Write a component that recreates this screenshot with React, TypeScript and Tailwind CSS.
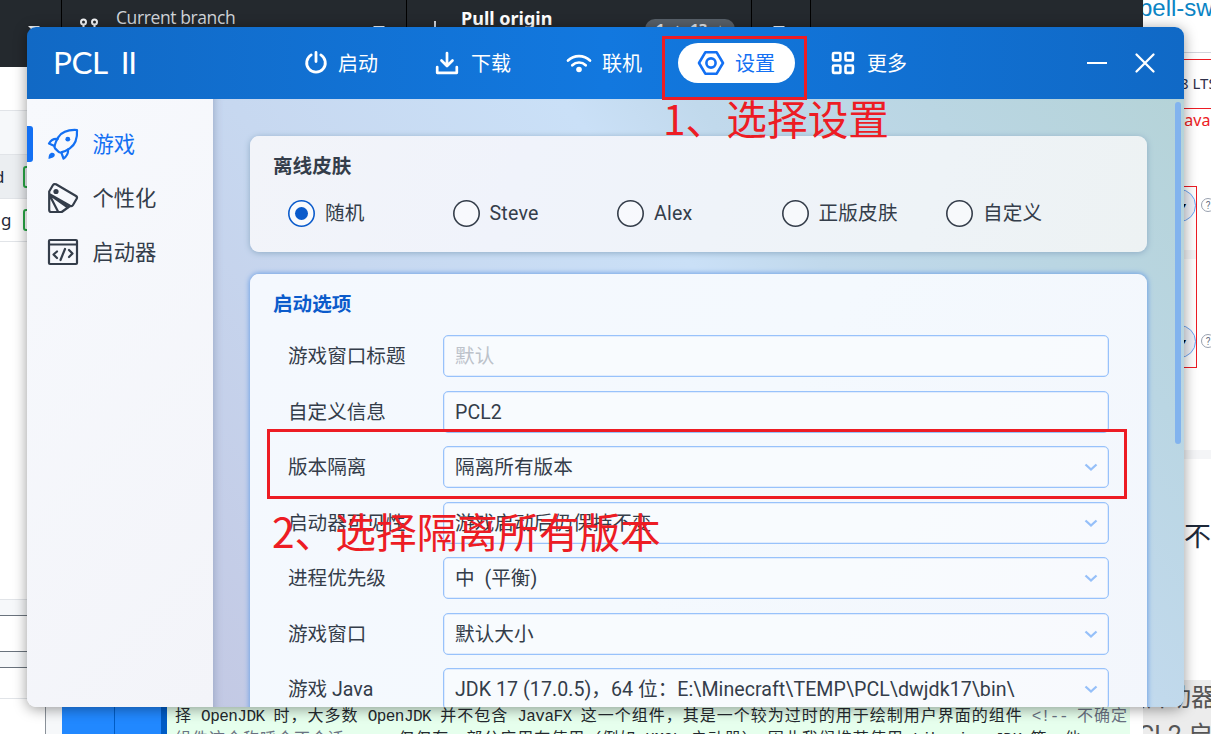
import React from "react";

const cjk = "font-['Roboto','Noto_Sans_CJK_SC',sans-serif]";

function Caret({ className = "" }: { className?: string }) {
  return <span className={"block h-0 w-0 border-x-[6px] border-t-[6px] border-x-transparent border-t-gray-100 " + className} />;
}

function BranchBar() {
  return (
    <div className="absolute left-0 top-0 flex h-[67px] w-[1143px] bg-[#24292e] text-[#d1d5da]">
      <div className="w-[62px] shrink-0 border-r border-black pl-[28px] pt-[26px]"><Caret /></div>
      <div className="flex w-[345px] shrink-0 border-r border-black pl-[17px]">
        <svg className="mt-[17px] h-[20px] w-[20px]" viewBox="0 0 20 20" fill="none" stroke="#f3f4f6" strokeWidth="2">
          <circle cx="4.500" cy="5" r="2.500" /><circle cx="15.500" cy="5" r="2.500" /><path d="M4.500 7.500v8M15.500 7.500v6" />
        </svg>
        <div className="ml-[17px] mt-[5px] w-[257px] whitespace-nowrap font-['Open_Sans',sans-serif] text-[17.500px] leading-[24px] tracking-[-0.400px]">Current branch</div>
        <Caret className="mt-[26px]" />
      </div>
      <div className="flex w-[345px] shrink-0 border-r border-black pl-[27px]">
        <div className="mt-[21px] h-[10px] w-[2px] bg-gray-300" />
        <div className="ml-[25px] mt-[6px] w-[184px] whitespace-nowrap font-['Noto_Sans',sans-serif] text-[18px] font-bold leading-[24px] text-white">Pull origin</div>
        <div className="mt-[19px] flex h-[20px] w-[90px] justify-center gap-[9px] rounded-full bg-[#586069] font-['Noto_Sans',sans-serif] text-[15px] font-bold leading-[18px] text-gray-200">
          <span>1</span><span>↑</span><span>13</span><span>↓</span>
        </div>
      </div>
      <div className="w-[59px] shrink-0 border-r border-black pl-[21px] pt-[26px]"><Caret /></div>
    </div>
  );
}

function FileList() {
  return (
    <div className="absolute left-0 top-[67px] flex h-[667px] w-[62px] flex-col bg-white font-['Noto_Sans',sans-serif] text-[17px] text-gray-800">
      <div className="h-[44px] border-b border-[#e1e4e8]" />
      <div className="h-[44px] border-b border-[#e1e4e8] bg-[#f6f8fa]" />
      <div className="flex h-[44px] items-center justify-between border-b border-[#e1e4e8] bg-[#ebeef1] pr-[17px]">
        <span className="-ml-[6px]">d</span><span className="h-[22px] w-[22px] rounded-[3px] border-2 border-[#28a745]" />
      </div>
      <div className="flex h-[43px] items-center justify-between border-b border-[#e1e4e8] pr-[17px]">
        <span className="ml-px">g</span><span className="h-[22px] w-[22px] rounded-[3px] border-2 border-[#28a745]" />
      </div>
      <div className="h-[357px]" />
      <div className="h-[17px] border-b border-t border-b-[#6a737d] border-t-[#e1e4e8] bg-[#f6f8fa]" />
      <div className="h-[35px]" />
      <div className="h-[17px] border-y border-[#6a737d] bg-[#f6f8fa]" />
      <div className="h-[31px] border-b border-[#e1e4e8]" />
      <div className="ml-[45px] flex-1 border-l border-[#8a9199] bg-[#f6f8fa]" />
    </div>
  );
}

/* Keeps the half-width and full-width runs on the editor's character grid. */
function Mono({ text }: { text: string }) {
  return (
    <>
      {text.split(/([\x20-\x7e]+)/).map((part, i) => (
        <span key={i} className={i % 2 ? "tracking-[-0.540px]" : "tracking-[1px]"}>{part}</span>
      ))}
    </>
  );
}

function DiffView() {
  return (
    <div className="absolute left-[62px] top-[680px] flex h-[54px] w-[1068px]">
      <div className="w-[53px] shrink-0 border-r border-[#005cc5] bg-[#2188ff]" />
      <div className="w-[46px] shrink-0 bg-[#2188ff]" />
      <div className="w-[6px] shrink-0 bg-[#005cc5]" />
      <div className="flex-1 overflow-hidden whitespace-pre bg-[#e6ffed] pl-[8px] pt-[27px] font-['Liberation_Mono','Noto_Sans_CJK_SC',monospace] text-[16px] leading-[20px] text-[#24292e]">
        <div className="h-[23px]">
          <Mono text="择 OpenJDK 时，大多数 OpenJDK 并不包含 JavaFX 这一个组件，其是一个较为过时的用于绘制用户界面的组件 " />
          <span className="text-gray-500"><Mono text="<!-- 不确定" /></span>
        </div>
        <div>
          <span className="text-gray-500"><Mono text="组件这个称呼合不合适 -->" /></span>
          <Mono text="，仅仅有一部分应用在使用（例如 HMCL 启动器），因此我们推荐使用 Liberica JDK 等，他" />
        </div>
      </div>
    </div>
  );
}

function WebPage() {
  return (
    <div className={"absolute left-[1143px] top-0 flex h-[734px] w-[68px] flex-col overflow-hidden bg-white " + cjk}>
      <div className="h-[53px] shrink-0 whitespace-nowrap border-b border-gray-300 font-['Liberation_Sans',sans-serif] text-[24px] leading-[16px] text-[#0b84c4]"><span className="-ml-[4px]">bell-sw</span></div>
      <div className="mt-[6px] h-[50px] shrink-0 whitespace-nowrap border-y border-[#ed1c24] pl-[37px] font-['Noto_Sans',sans-serif] text-[15px] leading-[47px] text-[#30304a]">8 LTS</div>
      <div className="h-[77px] shrink-0 whitespace-nowrap pl-[37px] font-['Noto_Sans',sans-serif] text-[16px] leading-[22px] text-[#ed1c24]">Java</div>
      <div className="flex h-[182px] shrink-0">
        <div className="flex w-[54px] shrink-0 flex-col border-y border-r border-[#ed1c24] pt-[2px]">
          <Select /><div className="mt-[28px] h-[9px] shrink-0 bg-[#f4f5f7]" /><div className="h-[66px] shrink-0" /><Select />
        </div>
        <div className="flex shrink-0 flex-col gap-[122px] pl-[4px] pt-[12px]"><Help /><Help /></div>
      </div>
      <div className="mt-[82px] h-[9px] shrink-0 bg-[#f4f5f7]" />
      <div className="h-[221px] shrink-0 whitespace-nowrap pl-[41px] pt-[60px] text-[27px] leading-[36px] text-gray-800">不限</div>
      <div className="flex-1 whitespace-nowrap bg-[#ececec] text-[25px] leading-[36px] text-[#555]"><div><span className="-ml-[2px]">启动器</span></div><div className="pt-[2px]"><span className="-ml-[5px]">CL2 启动</span></div></div>
    </div>
  );
}

function Select() {
  return <div className="flex h-[33px] w-[53px] shrink-0 items-center justify-end rounded-full border border-[#6ba4f3] bg-[#edf0f7] pr-[9px] text-[8px]">▾</div>;
}

function Help() {
  return <div className="flex h-[14px] w-[14px] shrink-0 items-center justify-center rounded-full border border-gray-400 text-[10px] text-gray-500">?</div>;
}

const ip = { fill: "none", stroke: "currentColor", strokeLinecap: "round", strokeLinejoin: "round" } as const;

function PowerIcon() {
  return <svg className="h-[26px] w-[26px]" viewBox="0 0 26 26" {...ip} strokeWidth="2.800"><path d="M8.200 4.900a9.300 9.300 0 1 0 9.600 0M13 2.500v9" /></svg>;
}
function DownIcon() {
  return <svg className="h-[26px] w-[26px]" viewBox="0 0 26 26" {...ip} strokeWidth="2.700"><path d="M13 3v12M7.500 10.500 13 16l5.500-5.500M3.200 17v5.800h19.600V17" /></svg>;
}
function WifiIcon() {
  return <svg className="h-[26px] w-[28px]" viewBox="0 0 28 26" {...ip} strokeWidth="2.700"><path d="M3 10.500a16 16 0 0 1 22 0M7.300 15.200a9.700 9.700 0 0 1 13.400 0" /><circle cx="14" cy="19.500" r="2.800" fill="currentColor" stroke="none" /></svg>;
}
function HexIcon() {
  return <svg className="h-[26px] w-[28px]" viewBox="0 0 28 26" {...ip} strokeWidth="2.600"><path d="M8.300 2.300h11.400L26 13l-6.300 10.700H8.300L2 13z" /><circle cx="14" cy="13" r="4.600" /></svg>;
}
function GridIcon() {
  return <svg className="h-[26px] w-[26px]" viewBox="0 0 26 26" {...ip} strokeWidth="2.600"><rect x="3" y="3" width="7.400" height="7.400" rx="1" /><rect x="15.500" y="3" width="7.400" height="7.400" rx="1" /><rect x="3" y="15.500" width="7.400" height="7.400" rx="1" /><rect x="15.500" y="15.500" width="7.400" height="7.400" rx="1" /></svg>;
}

function TitleBar() {
  const tab = "flex h-[40px] items-center rounded-full text-[20px] leading-none";
  const name = "pt-[2px]";
  return (
    <header className="flex h-[72px] shrink-0 items-center bg-[linear-gradient(90deg,#1169c5,#1278df_50%,#1069c6)] text-white">
      <div className="w-[266px] shrink-0 whitespace-nowrap pl-[26px] font-['Lato',sans-serif] text-[31.500px] leading-none tracking-[-0.500px]">PCL<span className="ml-[13px] tracking-[-1.200px]">II</span></div>
      <nav className="flex h-[40px] shrink-0">
        <div className={tab + " w-[132px] gap-[9px] pl-[10px]"}><PowerIcon /><span className={name}>启动</span></div>
        <div className={tab + " w-[132px] gap-[11px] pl-[9px]"}><DownIcon /><span className={name}>下载</span></div>
        <div className={tab + " w-[121px] gap-[9px] pl-[8px]"}><WifiIcon /><span className={name}>联机</span></div>
        <div className={tab + " w-[117px] gap-[10px] bg-white pl-[19px] text-[#1370f3]"}><HexIcon /><span className={name}>设置</span></div>
        <div className={tab + " w-[132px] gap-[11px] pl-[35px]"}><GridIcon /><span className={name}>更多</span></div>
      </nav>
      <div className="ml-[160px] flex shrink-0 items-center gap-[27px]">
        <div className="h-[2px] w-[20px] bg-white" />
        <svg className="h-[22px] w-[22px]" viewBox="0 0 22 22" {...ip} strokeWidth="2.300"><path d="m2.500 2.500 17 17m0-17-17 17" /></svg>
      </div>
    </header>
  );
}

function RocketIcon() {
  return (
    <svg className="h-[32px] w-[32px]" viewBox="0 0 32 32" {...ip} strokeWidth="2.200">
      <path d="M30 2C22 1.500 15.500 3 11.500 9 9 12.500 8.300 15 7.500 18q-.3 1.500.8 2.600l3.200 3.200q1 1 2.600.6c3.200-.9 5.700-1.800 8.700-4C28.500 16.500 30.500 10 30 2z" />
      <path d="M10.500 11C6.500 10.500 4 12 2 15.500L7.500 18M21 21.500c.5 4-1 6.500-4.500 9L14.500 25" />
      <circle cx="20.800" cy="11.200" r="2.400" fill="currentColor" stroke="none" />
      <path d="M1.500 31c0-4 1.200-6.200 3.800-6.200 2.900 0 3.400 3.400.7 4.600z" fill="currentColor" stroke="none" />
    </svg>
  );
}
function SwatchIcon() {
  return (
    <svg className="h-[32px] w-[32px]" viewBox="0 0 32 32" {...ip} strokeWidth="2.200">
      <path d="M2.200 9.500 6 3q1-1.500 3-.7L29 14q1.500 1 .8 2.500L26 23q-1 1.700-3 .8L2.200 12zM2.200 11v17q0 2 2 2h10.500L23 24M3 14l8 15.500M4 13.500l17 12" />
      <circle cx="9" cy="9.500" r="2.600" fill="currentColor" stroke="none" />
    </svg>
  );
}
function CodeIcon() {
  return <svg className="h-[32px] w-[32px]" viewBox="0 0 32 32" {...ip} strokeWidth="2.200"><rect x="2" y="4" width="28" height="24" rx="1" /><path d="M2 8.500h28M10 15.500 6.500 18.500l3.500 3.500M22 14l3.500 3.500L22 21M18 13l-4.500 11" /></svg>;
}

function Sidebar() {
  const item = "relative flex h-[54px] items-center gap-[13.500px] pl-[20px] text-[21.300px]";
  const name = "pt-px";
  return (
    <aside className="w-[186px] shrink-0 bg-[linear-gradient(135deg,#f7f9fd,#f3f4f9)] pt-[18px] text-[#343d4a]">
      <div className={item + " text-[#1370f3]"}>
        <span className="absolute left-0 top-[9px] h-[36px] w-[6px] rounded-r-[3px] bg-[#1370f3]" />
        <RocketIcon /><span className={name}>游戏</span>
      </div>
      <div className={item}><SwatchIcon /><span className={name}>个性化</span></div>
      <div className={item}><CodeIcon /><span className={name}>启动器</span></div>
    </aside>
  );
}

const skins = ["随机", "Steve", "Alex", "正版皮肤", "自定义"];

function SkinCard() {
  return (
    <section className="h-[116px] shrink-0 rounded-[9px] bg-[linear-gradient(110deg,#f2f4f9,#f0f3fb_30%,#eef3f7_75%,#edf2f3)] pl-[23px] pt-[19px] shadow-[0_1px_6px_#8eabc5]">
      <h2 className="h-[24px] text-[19.600px] font-bold leading-[24px]">离线皮肤</h2>
      <div className="mt-[20px] flex pl-[15px]">
        {skins.map((s, i) => (
          <label key={s} className="flex h-[28px] w-[164.500px] items-center gap-[10px] text-[19.600px]">
            {i === 0
              ? <span className="flex h-[27px] w-[27px] items-center justify-center rounded-full bg-white/60 shadow-[inset_0_0_0_1.600px_#0b5bcb]"><span className="h-[13px] w-[13px] rounded-full bg-[#0b5bcb]" /></span>
              : <span className="h-[27px] w-[27px] rounded-full bg-white/50 shadow-[inset_0_0_0_1.600px_#343d4a]" />}
            <span className="pt-[2px] tracking-[0.200px]">{s}</span>
          </label>
        ))}
      </div>
    </section>
  );
}

const rows = [
  ["游戏窗口标题", "默认", "hint"],
  ["自定义信息", "PCL2", "text"],
  ["版本隔离", "隔离所有版本", "select"],
  ["启动器可见性", "游戏启动后仍保持不变", "select"],
  ["进程优先级", "中  (平衡)", "select"],
  ["游戏窗口", "默认大小", "select"],
  ["游戏 Java", "JDK 17 (17.0.5)，64 位：E:\\Minecraft\\TEMP\\PCL\\dwjdk17\\bin\\", "select"],
];

function LaunchCard() {
  return (
    <section className="h-[470px] shrink-0 rounded-[9px] bg-[linear-gradient(125deg,#f4f8fe,#f4f9fe_50%,#f3f6fc)] pl-[23px] pr-[38px] pt-[19px] shadow-[0_0_5px_1px_#72a3e5]">
      <h2 className="h-[24px] text-[19.600px] font-bold leading-[24px] text-[#0b5bcb]">启动选项</h2>
      <div className="mt-[18px] flex flex-col gap-[13.500px] pl-[15px]">
        {rows.map(([name, value, kind]) => (
          <div key={name} className="flex h-[42px] shrink-0 items-center">
            <span className="w-[155px] shrink-0 whitespace-nowrap pt-[2px] text-[19.600px]">{name}</span>
            <div className={"flex h-[42px] flex-1 items-center justify-between rounded-[5px] border-[1.500px] border-[#98c2fb] bg-white/40 pl-[11px] pr-[10px] text-[19.600px] shadow-[inset_0_0_0_0.500px_#98c2fb80] " + (kind === "hint" ? "text-[#bcc2ca]" : "")}>
              <span className="whitespace-pre pt-[2px] tracking-[0.050px]">{value}</span>
              {kind === "select" && <svg className="h-[14px] w-[14px]" viewBox="0 0 14 14" fill="none" stroke="#96c0f9" strokeWidth="2.300"><path d="m1.500 4.500 5.500 5 5.500-5" /></svg>}
            </div>
          </div>
        ))}
      </div>
    </section>
  );
}

function LauncherWindow() {
  return (
    <div className="absolute left-[27px] top-[27px] h-[680px] w-[1157px] rounded-[9px] shadow-[0_2px_14px_#00000066]">
      <div className={"flex h-full flex-col overflow-hidden rounded-[9px] text-[#343d4a] " + cjk}>
        <TitleBar />
        <div className="flex min-h-0 flex-1">
          <Sidebar />
          <main className="flex min-w-0 flex-1 bg-[linear-gradient(52deg,#c3c9e4,#c7d8f0_34%,#cae0f7_57%,#c1d9ec_66%,#bad6e3_82%,#b5d3d8)] shadow-[inset_9px_0_9px_-8px_#8090b0a0]">
            <div className="flex w-[934px] shrink-0 flex-col gap-[22px] pl-[37px] pt-[37px]">
              <SkinCard />
              <LaunchCard />
            </div>
            <div className="ml-[28px] mt-[3px] h-[342px] w-[6px] rounded-full bg-[#82b3ee]" />
          </main>
        </div>
      </div>
    </div>
  );
}

function Annotations() {
  const note = "absolute whitespace-nowrap font-['Noto_Sans_CJK_SC',sans-serif] text-[40.700px] leading-[48px] text-[#ed1c24]";
  return (
    <>
      <div className="absolute left-[662px] top-[36px] h-[64px] w-[145px] border-[3px] border-[#ed1c24]" />
      <div className={note + " left-[663px] top-[94px]"}>1、选择设置</div>
      <div className="absolute left-[267px] top-[429px] h-[70px] w-[860px] border-[3px] border-[#ed1c24]" />
      <div className={note + " left-[272px] top-[507px]"}>2、选择隔离所有版本</div>
    </>
  );
}

export default function App() {
  return (
    <div className="relative h-[734px] w-[1211px] overflow-hidden bg-white">
      <FileList />
      <DiffView />
      <WebPage />
      <BranchBar />
      <LauncherWindow />
      <Annotations />
    </div>
  );
}
